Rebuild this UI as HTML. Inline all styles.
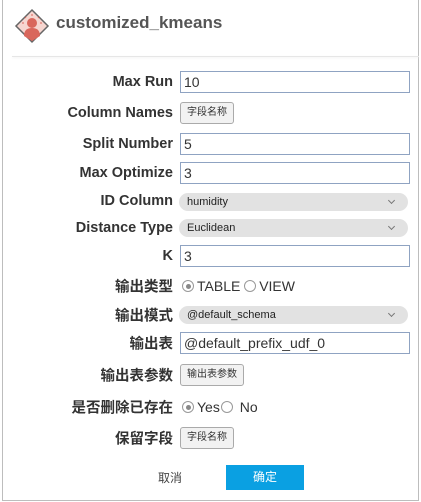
<!DOCTYPE html>
<html><head><meta charset="utf-8"><style>
*{margin:0;padding:0;box-sizing:border-box}
body{width:421px;height:502px;background:#fff;position:relative;overflow:hidden;font-family:"Liberation Sans","Noto Sans CJK SC",sans-serif;color:#333}
.frame{position:absolute;left:2px;top:0;width:417px;height:501px;border:1px solid #bdbdbd;border-top:none}
.title{position:absolute;left:56px;top:13px;font-size:17px;font-weight:bold;color:#555}
.panel{position:absolute;left:12px;top:56px;width:407px;height:1px;background:#e6e6e6;box-shadow:0 1px 2px #eee}
.lbl{position:absolute;right:248px;font-size:14.5px;font-weight:bold;color:#333;white-space:nowrap;transform:translateY(-50%)}
.inp{position:absolute;left:180px;width:230px;height:22px;border:1px solid #8fa3c2;font-size:14px;padding-left:3px;line-height:20px;color:#333;transform:translateY(-50%)}
.sel{position:absolute;left:179px;width:229px;height:18px;background:#e2e2e2;border-radius:9px;font-size:11px;padding-left:8px;line-height:18px;color:#222;transform:translateY(-50%)}
.sel:after{content:"";position:absolute;right:14px;top:5px;width:4px;height:4px;border-right:1.5px solid #777;border-bottom:1.5px solid #777;transform:rotate(45deg)}
.btn{position:absolute;left:180px;height:22px;border:1px solid #aaa;border-radius:3px;background:#f2f2f2;font-size:10px;padding:0 6px;line-height:20px;color:#333;transform:translateY(-50%)}
.rad{position:absolute;left:182px;font-size:14px;color:#333;transform:translateY(-50%);display:flex;align-items:center}
.r{display:inline-block;width:12px;height:12px;border:1px solid #999;border-radius:50%;margin-right:3px;position:relative;background:#fff}
.r.on:after{content:"";position:absolute;left:2.5px;top:2.5px;width:5px;height:5px;border-radius:50%;background:#888}
</style></head><body>
<div class="frame"></div>
<svg style="position:absolute;left:14px;top:8px" width="36" height="36" viewBox="0 0 36 36">
<path d="M18 2 L34 18 L18 34 L2 18 Z" fill="#f6d6d0" stroke="#666" stroke-width="1.5"/>
<circle cx="18" cy="15" r="5" fill="#d9675c"/>
<path d="M10 28 Q10 20 18 20 Q26 20 26 28 L18 33 Z" fill="#d9675c"/>
<g stroke="#d9675c" stroke-width="1"><path d="M18 6v2M11 9l1 1M25 9l-1 1M8 15h2M26 15h2"/></g>
</svg>
<div class="title">customized_kmeans</div>
<div class="panel"></div>

<div class="lbl" style="top:82px">Max Run</div><div class="inp" style="top:82px">10</div>
<div class="lbl" style="top:113px">Column Names</div><div class="btn" style="top:113px">字段名称</div>
<div class="lbl" style="top:144px">Split Number</div><div class="inp" style="top:144px">5</div>
<div class="lbl" style="top:173px">Max Optimize</div><div class="inp" style="top:173px">3</div>
<div class="lbl" style="top:201px">ID Column</div><div class="sel" style="top:202px">humidity</div>
<div class="lbl" style="top:228px">Distance Type</div><div class="sel" style="top:228px">Euclidean</div>
<div class="lbl" style="top:256px">K</div><div class="inp" style="top:256px">3</div>
<div class="lbl" style="top:286px">输出类型</div><div class="rad" style="top:286px"><span class="r on"></span>TABLE&nbsp;<span class="r"></span>VIEW</div>
<div class="lbl" style="top:315px">输出模式</div><div class="sel" style="top:315px">@default_schema</div>
<div class="lbl" style="top:343px">输出表</div><div class="inp" style="top:343px">@default_prefix_udf_0</div>
<div class="lbl" style="top:375px">输出表参数</div><div class="btn" style="top:375px">输出表参数</div>
<div class="lbl" style="top:407px">是否删除已存在</div><div class="rad" style="top:407px"><span class="r on"></span>Yes<span class="r" style="margin-left:1px"></span>&nbsp;No</div>
<div class="lbl" style="top:438px">保留字段</div><div class="btn" style="top:438px">字段名称</div>

<div style="position:absolute;left:158px;top:469px;font-size:12px;color:#444">取消</div>
<div style="position:absolute;left:226px;top:465px;width:78px;height:25px;background:#0aa0e2;color:#fff;font-size:12px;text-align:center;line-height:25px">确定</div>
</body></html>
